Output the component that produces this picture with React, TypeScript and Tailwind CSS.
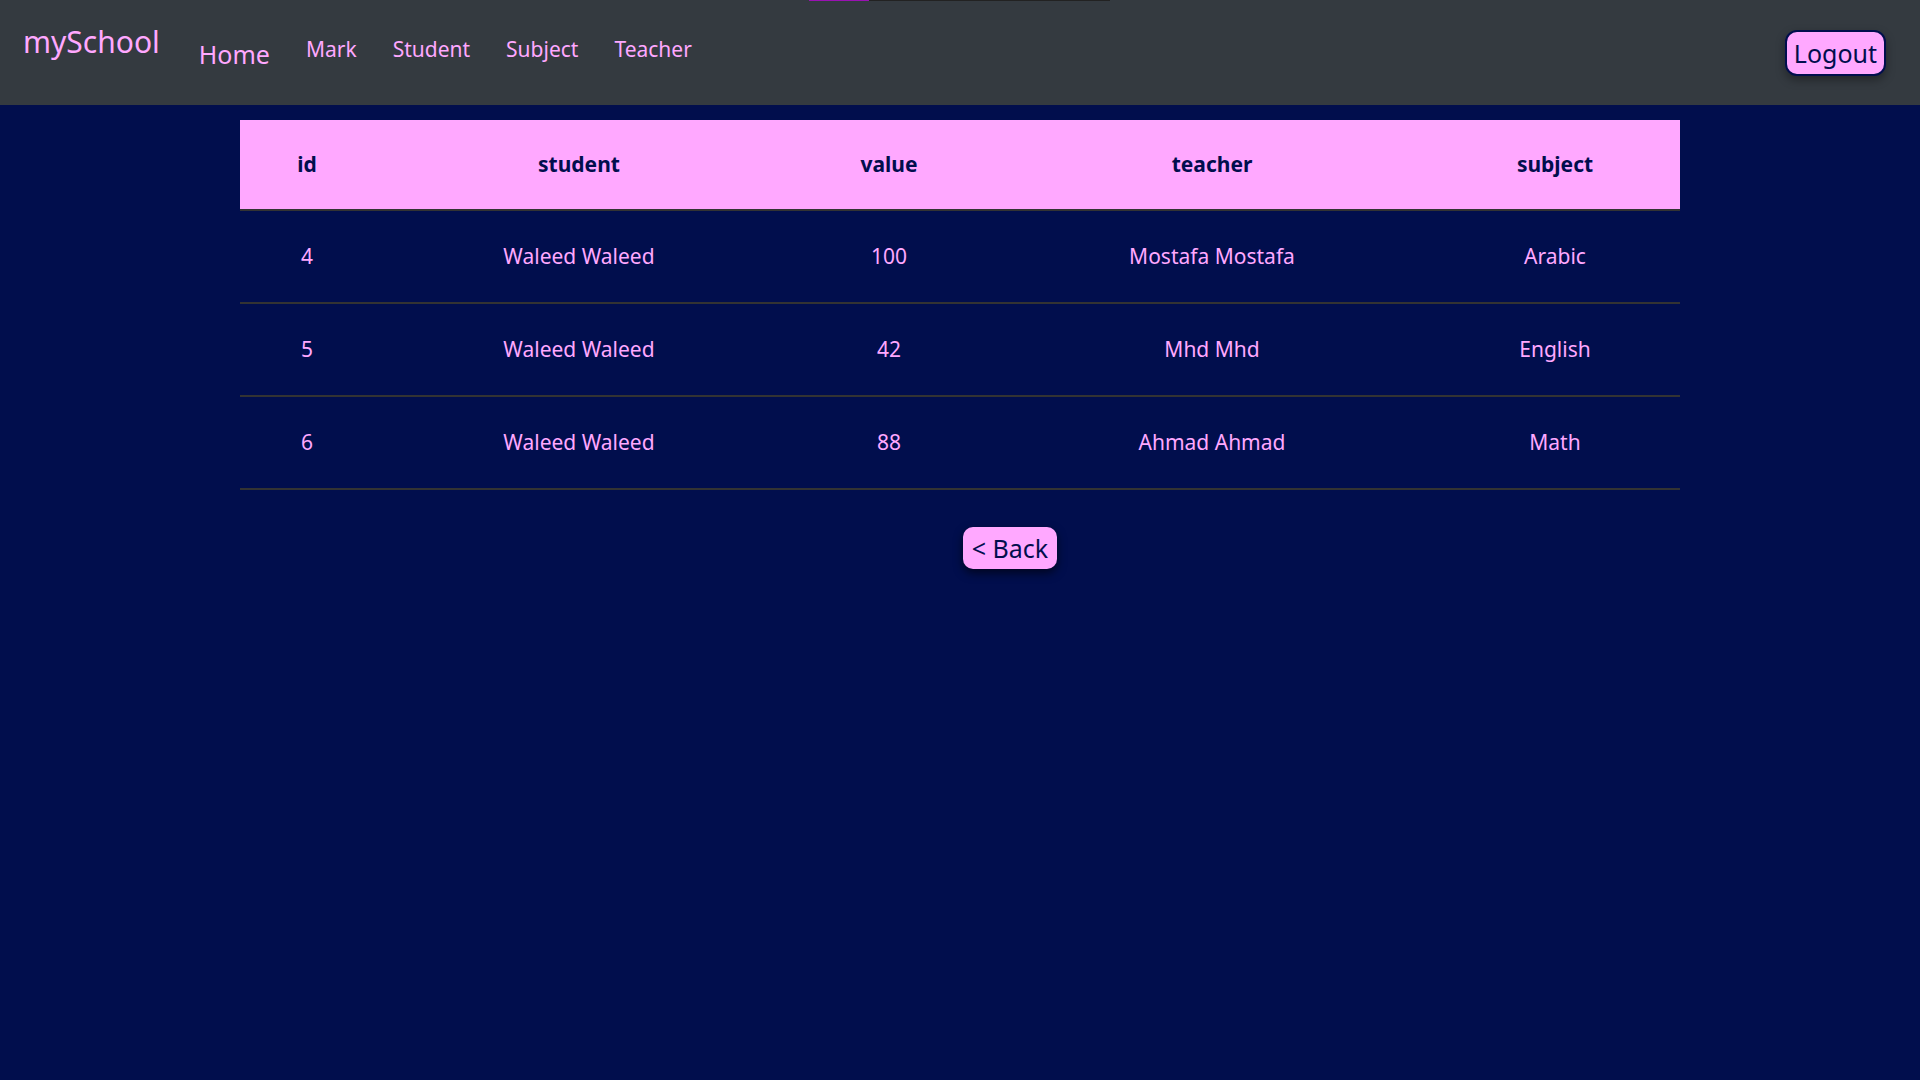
const rows = [
  { id: 4, student: "Waleed Waleed", value: 100, teacher: "Mostafa Mostafa", subject: "Arabic" },
  { id: 5, student: "Waleed Waleed", value: 42, teacher: "Mhd Mhd", subject: "English" },
  { id: 6, student: "Waleed Waleed", value: 88, teacher: "Ahmad Ahmad", subject: "Math" },
];

const cols = ["w-[134px]", "w-[410px]", "w-[210px]", "w-[436px]", "w-[250px]"];

export default function App() {
  return (
    <div className="min-h-screen bg-[#010e4d] font-['Noto_Sans',sans-serif] text-[#ffa8ff]">
      {/* loading bar */}
      <div className="absolute left-[809px] top-0 flex h-px w-[301px]">
        <div className="w-[60px] bg-[#9a12b3]" />
        <div className="flex-1 bg-[#222222]" />
      </div>

      <nav className="flex h-[105px] items-start bg-[#343a40] pl-[23px] pr-[34px]">
        <a className="mt-[22px] text-[30px] leading-[40px]">mySchool</a>
        <ul className="ml-[39px] flex items-start gap-[36px]">
          <li className="mt-[37px] text-[25px] leading-[34px]">Home</li>
          <li className="mt-[34px] text-[21px] leading-[30px]">Mark</li>
          <li className="mt-[34px] text-[21px] leading-[30px]">Student</li>
          <li className="mt-[34px] text-[21px] leading-[30px]">Subject</li>
          <li className="mt-[34px] text-[21px] leading-[30px]">Teacher</li>
        </ul>
        <button className="ml-auto mt-[30px] h-[46px] rounded-[12px] border-2 border-[#010e4d] bg-[#ffa8ff] px-[7px] text-[25px] leading-none text-[#010e4d] shadow-[0_4px_10px_rgba(0,0,0,0.35)]">
          Logout
        </button>
      </nav>

      <div className="mx-auto mt-[15px] w-[1440px]">
        <table className="w-full border-collapse text-center text-[21px]">
          <thead>
            <tr className="h-[90px] border-b-2 border-[#333333] bg-[#ffa8ff] text-[#010e4d]">
              {["id", "student", "value", "teacher", "subject"].map((h, i) => (
                <th key={h} className={`${cols[i]} font-bold`}>
                  {h}
                </th>
              ))}
            </tr>
          </thead>
          <tbody>
            {rows.map((r) => (
              <tr key={r.id} className="h-[93px] border-b-2 border-[#333333]">
                <td>{r.id}</td>
                <td>{r.student}</td>
                <td>{r.value}</td>
                <td>{r.teacher}</td>
                <td>{r.subject}</td>
              </tr>
            ))}
          </tbody>
        </table>

        <div className="mt-[37px] flex justify-center">
          <button className="ml-[100px] h-[42px] rounded-[10px] bg-[#ffa8ff] px-[9px] text-[25px] leading-none text-[#010e4d] shadow-[0_4px_10px_rgba(0,0,0,0.6)]">
            &lt; Back
          </button>
        </div>
      </div>
    </div>
  );
}
